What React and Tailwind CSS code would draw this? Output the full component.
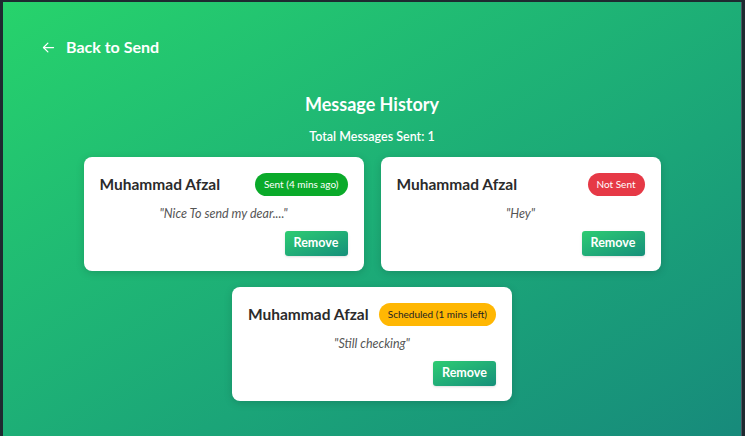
import React from "react";

const font = { fontFamily: "Lato, 'Open Sans', sans-serif" };

function Card({ badge, badgeClass, msg }) {
  return (
    <div className="w-[280px] shrink-0 bg-white rounded-lg shadow-[0_2px_8px_rgba(0,0,0,0.15)] px-4 pt-4 pb-[15px] flex flex-col">
      <div className="flex items-center justify-between gap-2 h-[23px] whitespace-nowrap">
        <span className="text-[15.5px] font-bold text-[#2b2b2b]">Muhammad Afzal</span>
        <span className={"rounded-full px-[9px] h-[23px] flex items-center text-[10px] " + badgeClass}>{badge}</span>
      </div>
      <p className="mt-[9px] text-center italic text-[12.5px] leading-[18px] text-[#555]">"{msg}"</p>
      <div className="flex justify-end mt-[8px]">
        <button className="w-[63px] h-[25px] rounded-[3px] bg-gradient-to-br from-[#2ecc71] to-[#16907a] text-white text-[12.5px] font-bold shadow-sm">Remove</button>
      </div>
    </div>
  );
}

export default function App() {
  return (
    <div className="w-[745px] h-[436px] bg-[#1e2a30] pl-[3px] pr-[3px] pt-[2px] overflow-hidden" style={font}>
      <div className="w-full h-[436px] bg-gradient-to-br from-[#27d36b] to-[#178a7b] border-r border-[#4b5563] flex flex-col">
        <div className="flex items-center pl-[38px] pt-[33px] h-[57px] text-white font-bold text-[16px] leading-[24px]">
          <svg width="15" height="15" viewBox="0 0 24 24" fill="none" stroke="white" strokeWidth="2" strokeLinecap="round" strokeLinejoin="round">
            <path d="M20 12H4" />
            <path d="M11 19l-7-7 7-7" />
          </svg>
          <span className="ml-[10px]">Back to Send</span>
        </div>
        <h1 className="text-center text-white font-bold text-[18px] leading-[24px] mt-[33px]">Message History</h1>
        <p className="text-center text-white font-semibold text-[12.5px] leading-[16px] mt-[13px]">Total Messages Sent: 1</p>
        <div className="flex flex-wrap justify-center gap-x-[17px] gap-y-4 mt-[12px] w-[600px] mx-auto">
          <Card badge="Sent (4 mins ago)" badgeClass="bg-[#0aaa2a] text-white" msg="Nice To send my dear...." />
          <Card badge="Not Sent" badgeClass="bg-[#e63946] text-white" msg="Hey" />
          <Card badge="Scheduled (1 mins left)" badgeClass="bg-[#ffb703] text-[#222]" msg="Still checking" />
        </div>
      </div>
    </div>
  );
}
